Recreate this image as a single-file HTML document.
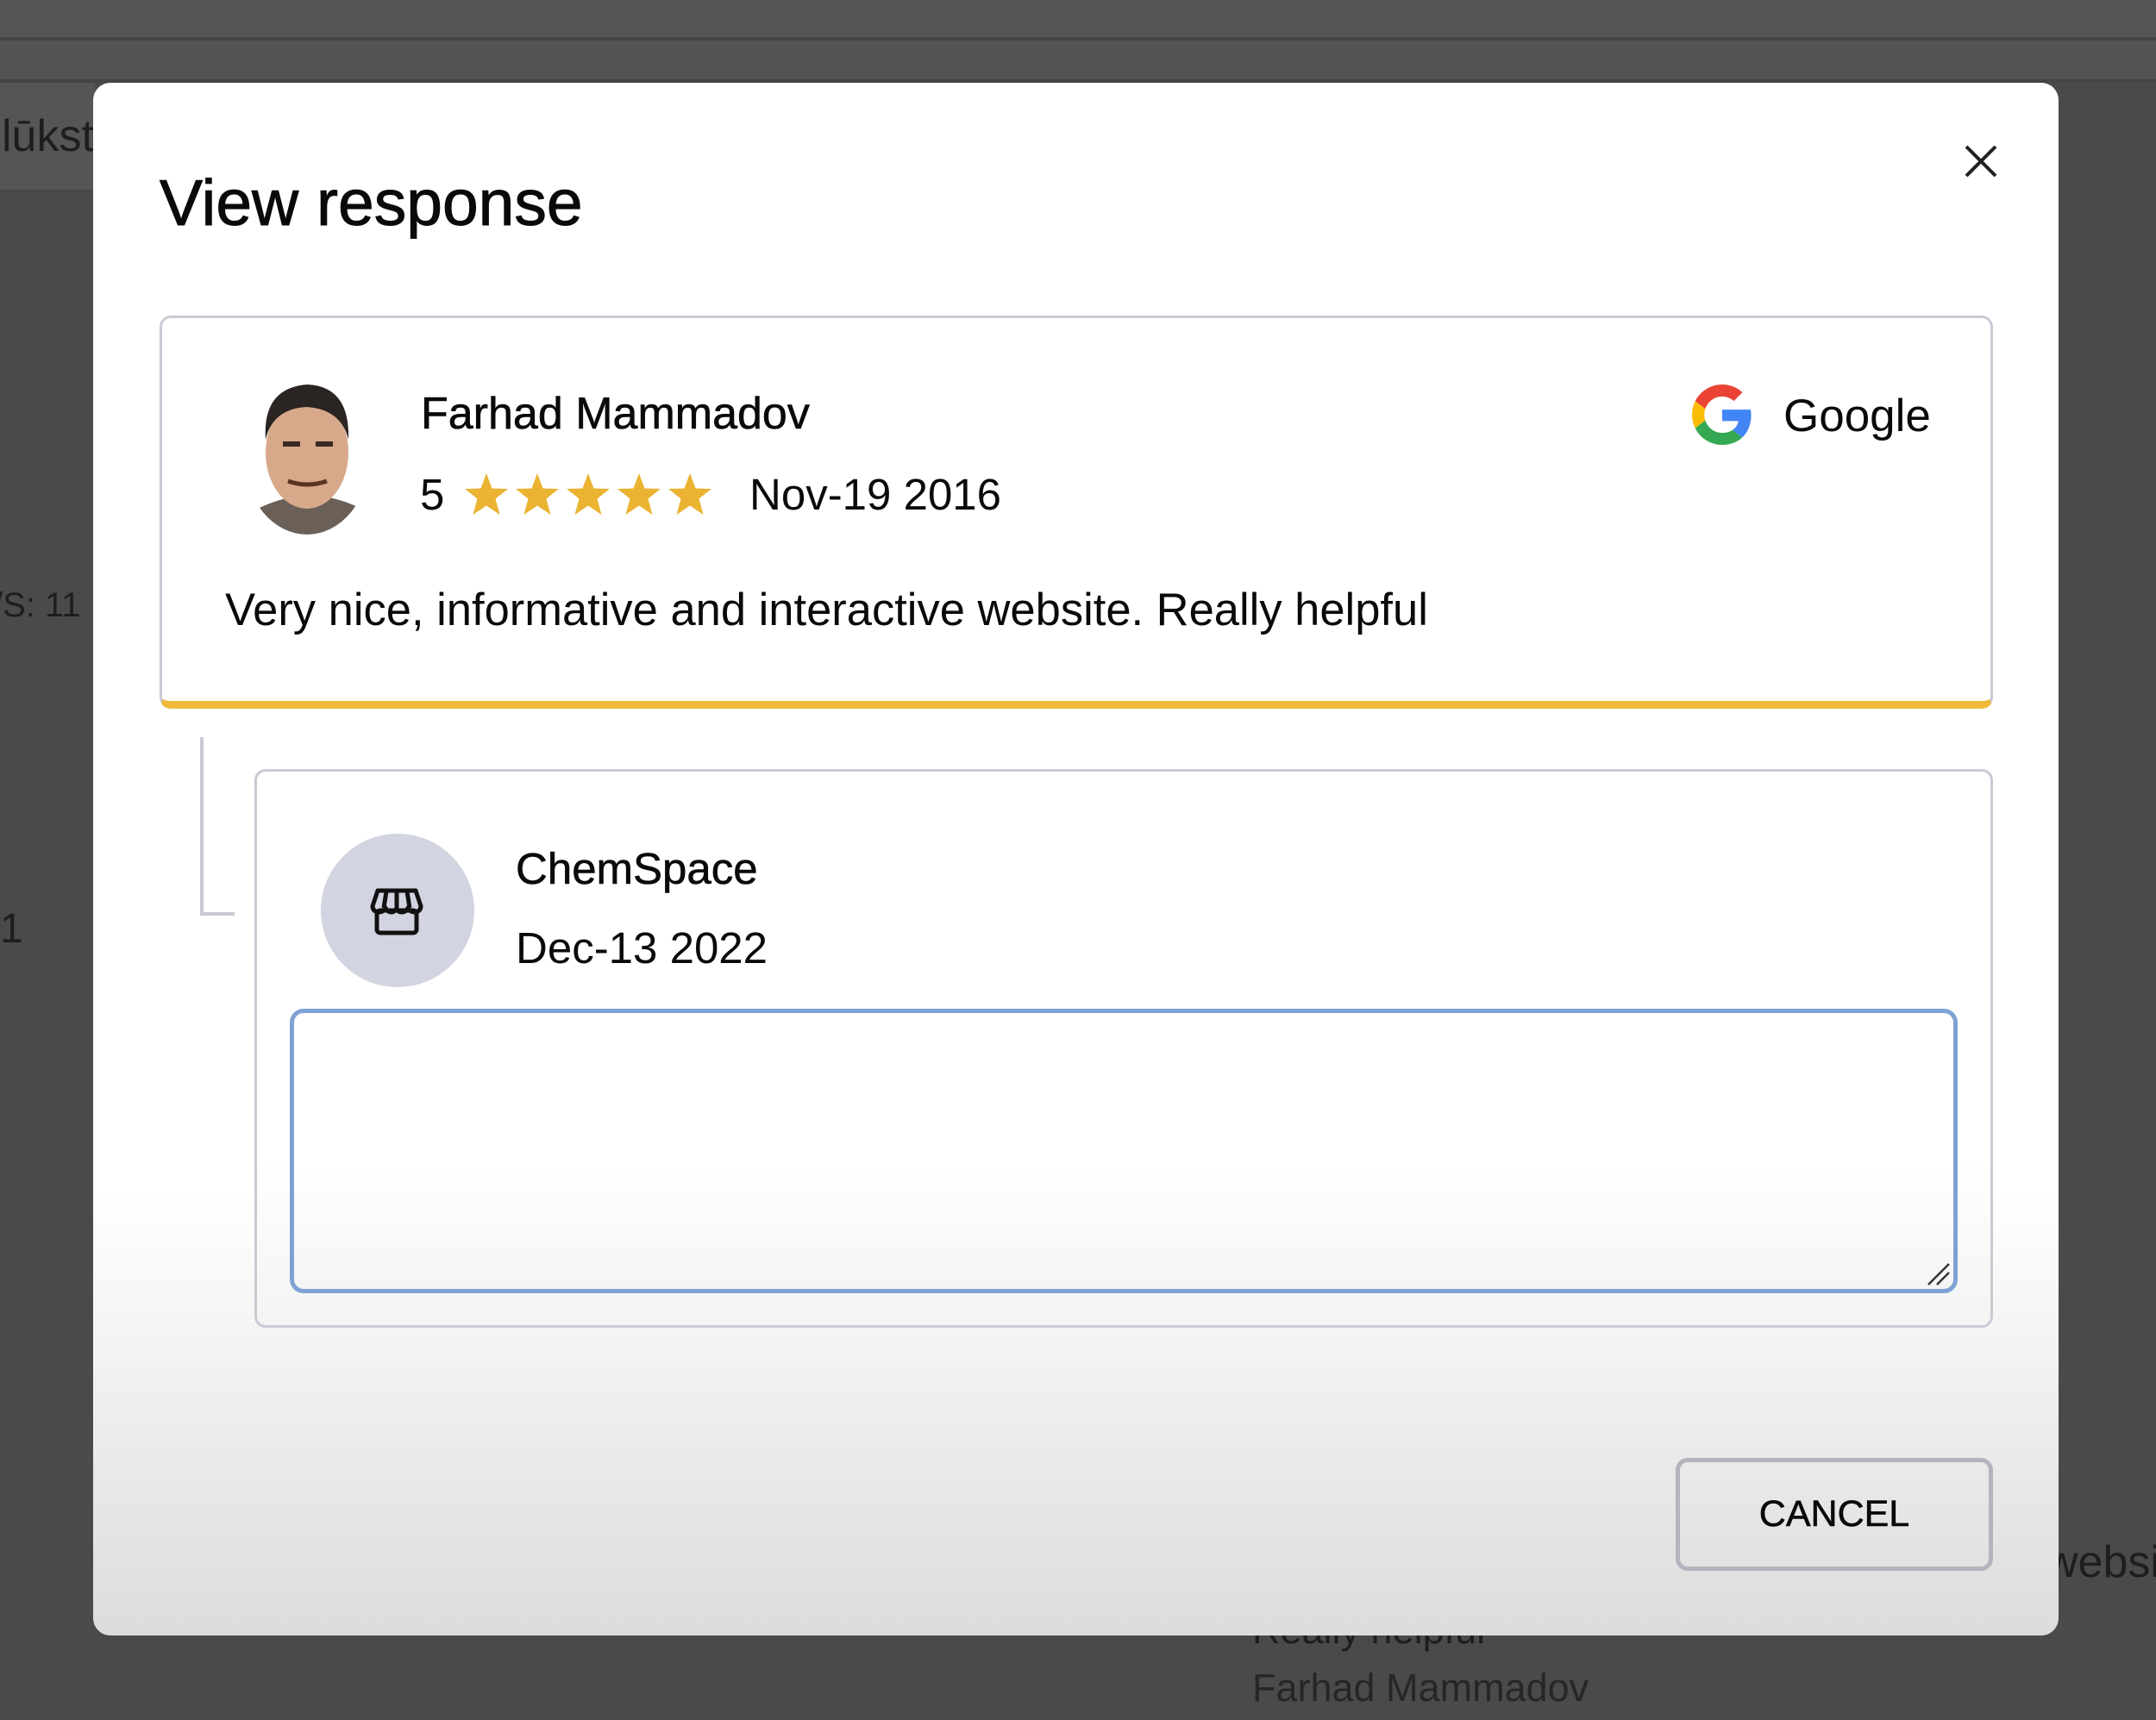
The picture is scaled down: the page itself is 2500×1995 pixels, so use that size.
<!DOCTYPE html>
<html><head><meta charset="utf-8"><style>
*{margin:0;padding:0;box-sizing:border-box}
body{width:2500px;height:1995px;background:#4a4a4a;position:relative;overflow:hidden;font-family:"Liberation Sans",sans-serif;color:#0a0a0a}
.a{position:absolute}
.bg{color:#1e1e1e;font-size:52px}
</style></head><body>
<div class="a" style="left:0;top:0;width:2500px;height:43px;background:#555"></div>
<div class="a" style="left:0;top:43px;width:2500px;height:4px;background:#444"></div>
<div class="a" style="left:0;top:47px;width:2500px;height:45px;background:#535353"></div>
<div class="a" style="left:0;top:92px;width:2500px;height:4px;background:#454545"></div>
<div class="a" style="left:0;top:96px;width:110px;height:124px;background:#555"></div>
<div class="a" style="left:0;top:220px;width:110px;height:4px;background:#474747"></div>
<div class="a bg" style="left:2px;top:128px">lūkst</div>
<div class="a bg" style="left:-8px;top:680px;font-size:40px">/S: 11</div>
<div class="a bg" style="left:0;top:1050px;font-size:48px">1</div>
<div class="a bg" style="left:2372px;top:1782px">website</div>
<div class="a bg" style="left:1452px;top:1865px;font-size:45px">Really helpful</div>
<div class="a bg" style="left:1452px;top:1932px;font-size:45px;color:#262626">Farhad Mammadov</div>

<div class="a" style="left:108px;top:96px;width:2279px;height:1801px;border-radius:20px;background:linear-gradient(#fff 0,#fff 1290px,#dcdcdc 1801px)"></div>

<div class="a" style="left:185px;top:192px;font-size:75px;color:#0a0a0a;-webkit-text-stroke:1px #0a0a0a">View response</div>
<svg class="a" style="left:2277px;top:167px" width="40" height="40" viewBox="0 0 40 40"><path d="M3 3L37 37M37 3L3 37" stroke="#222" stroke-width="4"/></svg>

<div class="a" style="left:185px;top:366px;width:2126px;height:456px;border:3px solid #c9cad4;border-bottom:9px solid #f0b93a;border-radius:13px;background:#fff"></div>
<svg class="a" style="left:284px;top:440px" width="150" height="182" viewBox="0 0 150 182">
<defs><clipPath id="c"><ellipse cx="72" cy="92" rx="72" ry="88"/></clipPath></defs>
<g clip-path="url(#c)">
<rect width="150" height="182" fill="#fff"/>
<path d="M5 182 L15 150 Q75 120 135 150 L145 182Z" fill="#6b6058"/>
<ellipse cx="72" cy="85" rx="48" ry="65" fill="#d7a98a"/>
<path d="M24 70 Q20 10 72 6 Q122 8 120 70 Q112 35 72 32 Q32 34 24 70Z" fill="#2a2422"/>
<path d="M44 75h20M82 75h20" stroke="#3a2a22" stroke-width="6"/>
<path d="M50 118 Q72 126 95 118" stroke="#5a3325" stroke-width="5" fill="none"/>
</g></svg>
<div class="a" style="left:488px;top:450px;font-size:52px;-webkit-text-stroke:0.6px #0a0a0a">Farhad Mammadov</div>
<div class="a" style="left:487px;top:544px;font-size:51px">5</div>
<svg class="a" style="left:538px;top:547px" width="290" height="56" viewBox="0 0 290 56">
<g fill="#eab331">
<path id="s" d="M26 2L32.5 19.5 51 20 36.5 31.5 41.5 50 26 39.5 10.5 50 15.5 31.5 1 20 19.5 19.5Z"/>
<use href="#s" x="59"/><use href="#s" x="118"/><use href="#s" x="177"/><use href="#s" x="236"/>
</g></svg>
<div class="a" style="left:869px;top:544px;font-size:51px">Nov-19 2016</div>
<svg class="a" style="left:1962px;top:446px" width="70" height="70" viewBox="0 0 48 48">
<path fill="#EA4335" d="M24 9.5c3.54 0 6.71 1.220 9.21 3.6l6.85-6.85C35.9 2.38 30.47 0 24 0 14.62 0 6.51 5.38 2.56 13.22l7.98 6.19C12.43 13.72 17.74 9.5 24 9.5z"/>
<path fill="#4285F4" d="M46.98 24.55c0-1.57-.15-3.09-.38-4.55H24v9.02h12.94c-.58 2.96-2.26 5.48-4.78 7.18l7.73 6c4.51-4.18 7.09-10.36 7.09-17.65z"/>
<path fill="#FBBC05" d="M10.53 28.59c-.48-1.45-.76-2.990-.76-4.59s.27-3.14.76-4.590l-7.98-6.19C.92 16.46 0 20.12 0 24c0 3.880.92 7.54 2.56 10.78l7.97-6.19z"/>
<path fill="#34A853" d="M24 48c6.48 0 11.93-2.13 15.89-5.81l-7.73-6c-2.15 1.45-4.92 2.3-8.16 2.3-6.26 0-11.57-4.22-13.470-9.91l-7.98 6.19C6.51 42.62 14.62 48 24 48z"/>
</svg>
<div class="a" style="left:2068px;top:452px;font-size:53px">Google</div>
<div class="a" style="left:261px;top:677px;font-size:52.5px">Very nice, informative and interactive website. Really helpful</div>

<div class="a" style="left:232px;top:855px;width:4px;height:207px;background:#c9cad4"></div>
<div class="a" style="left:232px;top:1058px;width:40px;height:4px;background:#c9cad4"></div>

<div class="a" style="left:295px;top:892px;width:2016px;height:648px;border:3px solid #c9cad4;border-radius:13px;background:linear-gradient(#fff 0,#fff 450px,#f3f3f3 648px)"></div>
<div class="a" style="left:372px;top:967px;width:178px;height:178px;border-radius:50%;background:#d3d4e1"></div>
<svg class="a" style="left:428px;top:1025px" width="64" height="64" viewBox="0 0 64 64">
<path d="M10 8h44l6 18q0 6-7 7-6 0-8-5-2 5-7 5t-6-5q-2 5-6 5-5 0-7-5-2 5-8 5-7-1-7-7z" fill="none" stroke="#111" stroke-width="5" stroke-linejoin="round"/>
<path d="M20 9l-3 19M32 9v19M44 9l3 19" stroke="#111" stroke-width="5"/>
<rect x="9" y="31" width="46" height="26" rx="4" fill="none" stroke="#111" stroke-width="5"/>
</svg>
<div class="a" style="left:598px;top:978px;font-size:51px;-webkit-text-stroke:0.6px #0a0a0a">ChemSpace</div>
<div class="a" style="left:598px;top:1070px;font-size:51px">Dec-13 2022</div>
<div class="a" style="left:336px;top:1170px;width:1934px;height:330px;border:5px solid #7ea2d3;border-radius:16px;background:linear-gradient(#fff 0,#fff 180px,#f4f4f4 330px)"></div>
<svg class="a" style="left:2232px;top:1462px" width="30" height="30" viewBox="0 0 30 30"><path d="M4 28L28 4M14 28L28 14" stroke="#333" stroke-width="2.5"/></svg>

<div class="a" style="left:1943px;top:1691px;width:368px;height:131px;border:5px solid #b3b4bd;border-radius:14px;display:flex;align-items:center;justify-content:center;font-size:43px;color:#0a0a0a;-webkit-text-stroke:0.6px #0a0a0a">CANCEL</div>
</body></html>
